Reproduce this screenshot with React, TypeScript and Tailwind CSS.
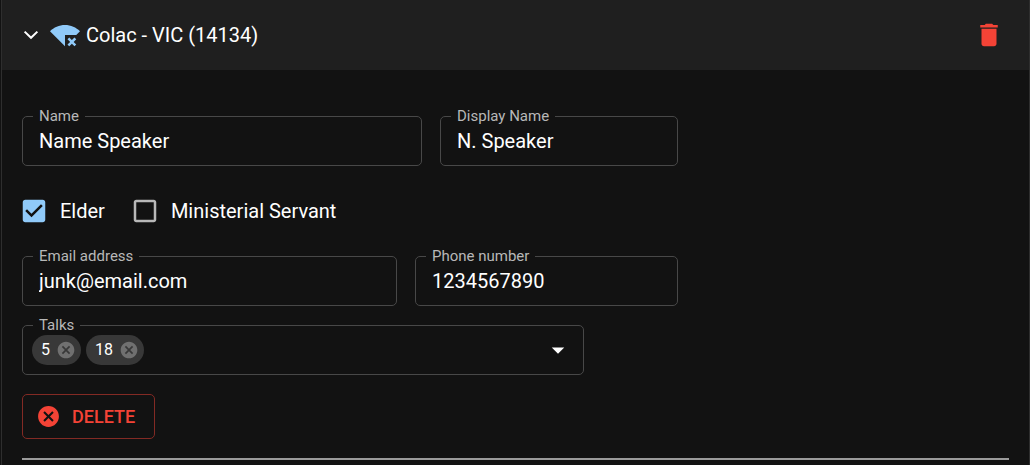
import { useId, useState } from "react";
import type { ReactNode } from "react";

const PATHS = {
  wifiBad:
    "M24 8.98C20.93 5.9 16.69 4 12 4S3.07 5.9 0 8.98L12 21v-9h8.99L24 8.98zM19.59 14l-2.09 2.09-.3-.3L15.41 14 14 15.41l1.79 1.79.3.3L14 19.59 15.41 21l2.09-2.08L19.59 21 21 19.59l-2.08-2.09L21 15.41 19.59 14z",
  trash:
    "M6 19c0 1.1.9 2 2 2h8c1.1 0 2-.9 2-2V7H6v12zM19 4h-3.5l-1-1h-5l-1 1H5v2h14V4z",
  cancel:
    "M12 2C6.47 2 2 6.47 2 12s4.47 10 10 10 10-4.47 10-10S17.53 2 12 2zm5 13.59L15.59 17 12 13.41 8.41 17 7 15.59 10.59 12 7 8.41 8.41 7 12 10.59 15.59 7 17 8.41 13.41 12 17 15.59z",
  dropDown: "M7 10l5 5 5-5z",
  boxChecked:
    "M19 3H5c-1.11 0-2 .9-2 2v14c0 1.1.89 2 2 2h14c1.11 0 2-.9 2-2V5c0-1.1-.89-2-2-2zm-9 14l-5-5 1.41-1.41L10 14.17l7.59-7.59L19 8l-9 9z",
  boxEmpty:
    "M19 5v14H5V5h14m0-2H5c-1.1 0-2 .9-2 2v14c0 1.1.9 2 2 2h14c1.1 0 2-.9 2-2V5c0-1.1-.9-2-2-2z",
};

function Icon({ name, className }: { name: keyof typeof PATHS; className: string }) {
  return (
    <svg viewBox="0 0 24 24" fill="currentColor" aria-hidden="true" className={`block shrink-0 ${className}`}>
      <path d={PATHS[name]} />
    </svg>
  );
}

function Chevron() {
  return (
    <svg viewBox="0 0 24 24" fill="none" stroke="currentColor" strokeWidth="1.6" aria-hidden="true" className="block size-[30px]">
      <path d="M6.9 9.3 12 14.2l5.1-4.9" />
    </svg>
  );
}

function Outline({ label, htmlFor, children }: { label: string; htmlFor: string; children: ReactNode }) {
  return (
    <fieldset className="min-w-0 rounded-[5px] border border-[#484848] px-2.5">
      <legend className="px-1.5 text-[15px] leading-[19px] text-[#b8b8b8]">
        <label htmlFor={htmlFor} className="block">
          {label}
        </label>
      </legend>
      {children}
    </fieldset>
  );
}

function TextField({ label, type = "text", value }: { label: string; type?: string; value: string }) {
  const id = useId();
  return (
    <Outline label={label} htmlFor={id}>
      <input
        id={id}
        type={type}
        defaultValue={value}
        className="mb-[9px] block h-[30px] w-full bg-transparent px-1.5 text-xl leading-[30px] text-white outline-none"
      />
    </Outline>
  );
}

function CheckField({ label, initial }: { label: string; initial: boolean }) {
  const [checked, setChecked] = useState(initial);
  return (
    <label className="flex items-center gap-[11px] text-xl leading-[30px]">
      <span className="grid">
        <input
          type="checkbox"
          checked={checked}
          onChange={(e) => setChecked(e.target.checked)}
          className="col-start-1 row-start-1 size-[30px] cursor-pointer appearance-none"
        />
        <Icon
          name={checked ? "boxChecked" : "boxEmpty"}
          className={`pointer-events-none col-start-1 row-start-1 size-[30px] ${checked ? "text-[#90caf9]" : "text-[#b8b8b8]"}`}
        />
      </span>
      {label}
    </label>
  );
}

function TalksField() {
  const id = useId();
  const [talks, setTalks] = useState([5, 18]);
  return (
    <Outline label="Talks" htmlFor={id}>
      <div className="mb-[9px] -ml-px flex h-[30px] items-center gap-[5px]">
        {talks.map((talk) => (
          <span key={talk} className="flex h-[30px] items-center gap-1.5 rounded-full bg-[#383838] pr-[5px] pl-[9px] text-base">
            {talk}
            <button
              type="button"
              aria-label={`Remove talk ${talk}`}
              onClick={() => setTalks(talks.filter((t) => t !== talk))}
              className="cursor-pointer text-[#707070]"
            >
              <Icon name="cancel" className="size-5" />
            </button>
          </span>
        ))}
        <input id={id} type="text" className="h-[30px] min-w-0 flex-1 bg-transparent text-xl outline-none" />
        <button type="button" aria-label="Open" className="cursor-pointer text-white">
          <Icon name="dropDown" className="size-[30px]" />
        </button>
      </div>
    </Outline>
  );
}

export default function App() {
  return (
    <div className="min-h-screen bg-[#121212] pl-px font-[Roboto,sans-serif] text-white">
      <section className="min-h-screen border-x border-[#2e2e2e]">
        <header className="flex h-[70px] items-center bg-[#1f1f1f] pr-[25px] pl-3.5">
          <button type="button" aria-label="Collapse" className="cursor-pointer">
            <Chevron />
          </button>
          <Icon name="wifiBad" className="ml-1 size-[30px] text-[#90caf9]" />
          <h2 className="ml-1.5 flex-1 text-xl leading-[30px] font-normal">Colac - VIC (14134)</h2>
          <button type="button" aria-label="Delete congregation" className="cursor-pointer text-[#f44336]">
            <Icon name="trash" className="size-[30px]" />
          </button>
        </header>

        <form className="px-5 pt-[37px]">
          <div className="grid max-w-[656px] grid-cols-[400fr_238fr] gap-[18px]">
            <TextField label="Name" value="Name Speaker" />
            <TextField label="Display Name" value="N. Speaker" />
          </div>

          <div className="mt-[30px] mb-[21px] -ml-[3px] flex gap-[25px]">
            <CheckField label="Elder" initial={true} />
            <CheckField label="Ministerial Servant" initial={false} />
          </div>

          <div className="grid max-w-[656px] grid-cols-[375fr_263fr] gap-[18px]">
            <TextField label="Email address" type="email" value="junk@email.com" />
            <TextField label="Phone number" type="tel" value="1234567890" />
          </div>

          <div className="mt-2.5 max-w-[562px]">
            <TalksField />
          </div>

          <button
            type="button"
            className="mt-[19px] flex h-[45px] cursor-pointer items-center gap-[11px] rounded-[5px] border border-[#832a24] pr-[19px] pl-[13px] text-lg font-medium text-[#f44336] uppercase"
          >
            <Icon name="cancel" className="size-[25px]" />
            Delete
          </button>

          <hr className="mt-[19px] border-t-2 border-[#9a9a9a]" />
        </form>
      </section>
    </div>
  );
}
